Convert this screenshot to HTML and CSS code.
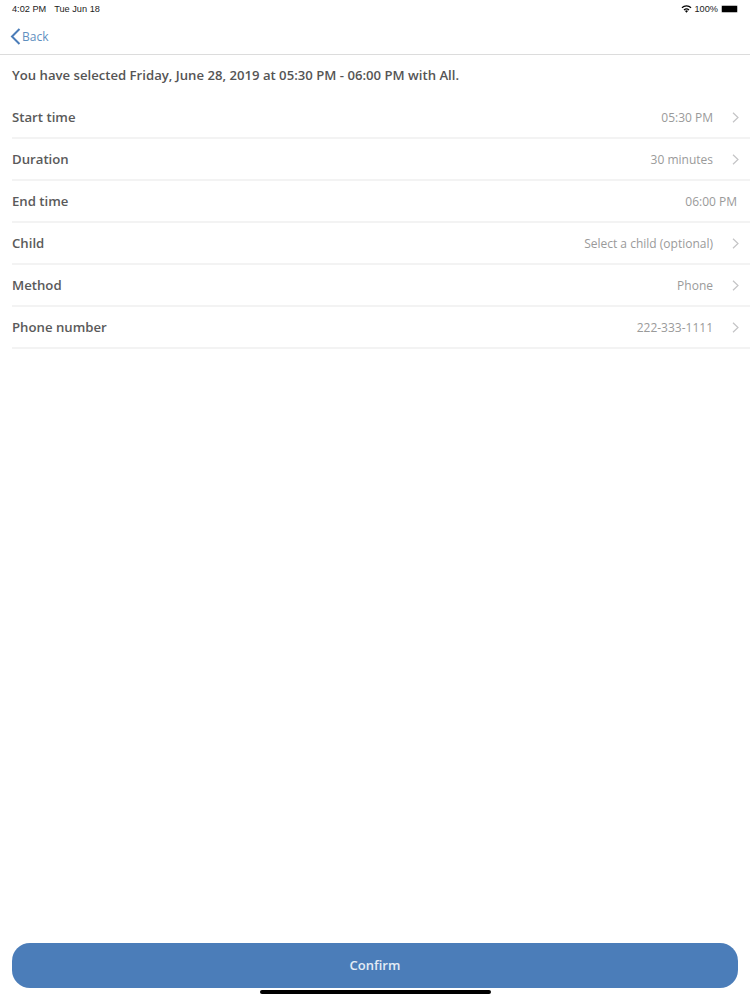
FILE: index.html
```html
<!DOCTYPE html>
<html lang="en">
<head>
  <meta charset="utf-8" />
  <title>Confirm appointment</title>
  <meta name="viewport" content="width=device-width, initial-scale=1">
  <link rel="stylesheet" href="styles.css">
</head>
<body>

<div class="page">
  <div class="status-bar">
    <div class="status-left">
      <span>4:02 PM</span>
      <span>Tue Jun 18</span>
    </div>
    <div class="status-right">
      <svg class="wifi" width="11" height="8" viewBox="0 0 13 10">
        <path d="M6.5 9.6 4.6 7.5a2.8 2.8 0 0 1 3.8 0z" fill="#000"/>
        <path d="M3.3 6.3a4.8 4.8 0 0 1 6.4 0" fill="none" stroke="#000" stroke-width="1.4"/>
        <path d="M.8 3.4a8.4 8.4 0 0 1 11.4 0" fill="none" stroke="#000" stroke-width="1.5"/>
      </svg>
      <span>100%</span>
      <div class="battery"><div class="battery-fill"></div></div>
    </div>
  </div>

  <div class="nav-bar">
    <svg class="back-icon" width="11" height="17" viewBox="0 0 11 17">
      <path d="M9.5 1 2 8.5 9.5 16" fill="none" stroke="#4b7db9" stroke-width="2"/>
    </svg>
    <span>Back</span>
  </div>

  <div class="summary">You have selected Friday, June 28, 2019 at 05:30 PM - 06:00 PM with All.</div>

  <div class="rows">
    <div class="row">
      <div class="row-label">Start time</div>
      <div class="row-value">05:30 PM</div>
      <svg class="chevron" width="7" height="11" viewBox="0 0 7 11"><path d="M1 .7 6 5.5 1 10.3" fill="none" stroke="#c4c4c6" stroke-width="1.2"/></svg>
    </div>
    <div class="row">
      <div class="row-label">Duration</div>
      <div class="row-value">30 minutes</div>
      <svg class="chevron" width="7" height="11" viewBox="0 0 7 11"><path d="M1 .7 6 5.5 1 10.3" fill="none" stroke="#c4c4c6" stroke-width="1.2"/></svg>
    </div>
    <div class="row">
      <div class="row-label">End time</div>
      <div class="row-value no-arrow">06:00 PM</div>
    </div>
    <div class="row">
      <div class="row-label">Child</div>
      <div class="row-value">Select a child (optional)</div>
      <svg class="chevron" width="7" height="11" viewBox="0 0 7 11"><path d="M1 .7 6 5.5 1 10.3" fill="none" stroke="#c4c4c6" stroke-width="1.2"/></svg>
    </div>
    <div class="row">
      <div class="row-label">Method</div>
      <div class="row-value">Phone</div>
      <svg class="chevron" width="7" height="11" viewBox="0 0 7 11"><path d="M1 .7 6 5.5 1 10.3" fill="none" stroke="#c4c4c6" stroke-width="1.2"/></svg>
    </div>
    <div class="row">
      <div class="row-label">Phone number</div>
      <div class="row-value">222-333-1111</div>
      <svg class="chevron" width="7" height="11" viewBox="0 0 7 11"><path d="M1 .7 6 5.5 1 10.3" fill="none" stroke="#c4c4c6" stroke-width="1.2"/></svg>
    </div>
  </div>

  <div class="footer">
    <button class="confirm">Confirm</button>
    <div class="home-indicator"></div>
  </div>
</div>

</body>
</html>
```

FILE: styles.css
```css
html, body {
  margin:0;
  height:100%;
  background:#fff;
  font-family:"Open Sans", "Noto Sans", sans-serif;
}
.page {
  display:flex;
  flex-direction:column;
  height:1000px;
  overflow:hidden;
}

/* status bar */
.status-bar {
  display:flex;
  justify-content:space-between;
  align-items:center;
  height:17px;
  padding:0 12px 1px 12px;
  font-family:"Liberation Sans", sans-serif;
  font-size:9.2px;
  color:#222;
}
.status-left {
  display:flex;
  gap:8px;
}
.status-right {
  display:flex;
  align-items:center;
  gap:3px;
}
.battery {
  width:17px;
  height:8px;
  padding:1px;
  border-radius:2px;
  box-sizing:border-box;
  background:#bbb;
}
.battery-fill {
  height:100%;
  background:#000;
}

/* nav */
.nav-bar {
  display:flex;
  align-items:center;
  gap:1px;
  height:36px;
  padding-left:10px;
  border-bottom:1px solid #dcdcdc;
  color:#5f8fbf;
  font-size:12px;
}

.summary {
  height:42px;
  line-height:41px;
  padding-left:12px;
  font-size:13.15px;
  font-weight:600;
  color:#555;
  white-space:nowrap;
}

/* rows */
.rows {
  margin-left:12px;
}
.row {
  display:flex;
  align-items:center;
  height:40px;
  border-bottom:2px solid #f3f3f3;
}
.row-label {
  flex:1;
  font-size:13.2px;
  font-weight:600;
  color:#5a5a5a;
}
.row-value {
  font-size:12px;
  color:#9a9a9a;
}
.row-value.no-arrow {
  margin-right:13px;
}
.chevron {
  margin:0 11px 0 19px;
}

/* footer */
.footer {
  margin-top:auto;
  display:flex;
  flex-direction:column;
  align-items:center;
  padding-bottom:6px;
}
.confirm {
  width:726px;
  height:45px;
  padding-bottom:2px;
  border:none;
  border-radius:18px;
  background:#4b7db9;
  color:#e4ecf5;
  font-family:inherit;
  font-size:13px;
  font-weight:600;
}
.home-indicator {
  width:231px;
  height:4px;
  margin-top:2px;
  border-radius:2px;
  background:#000;
}
```
